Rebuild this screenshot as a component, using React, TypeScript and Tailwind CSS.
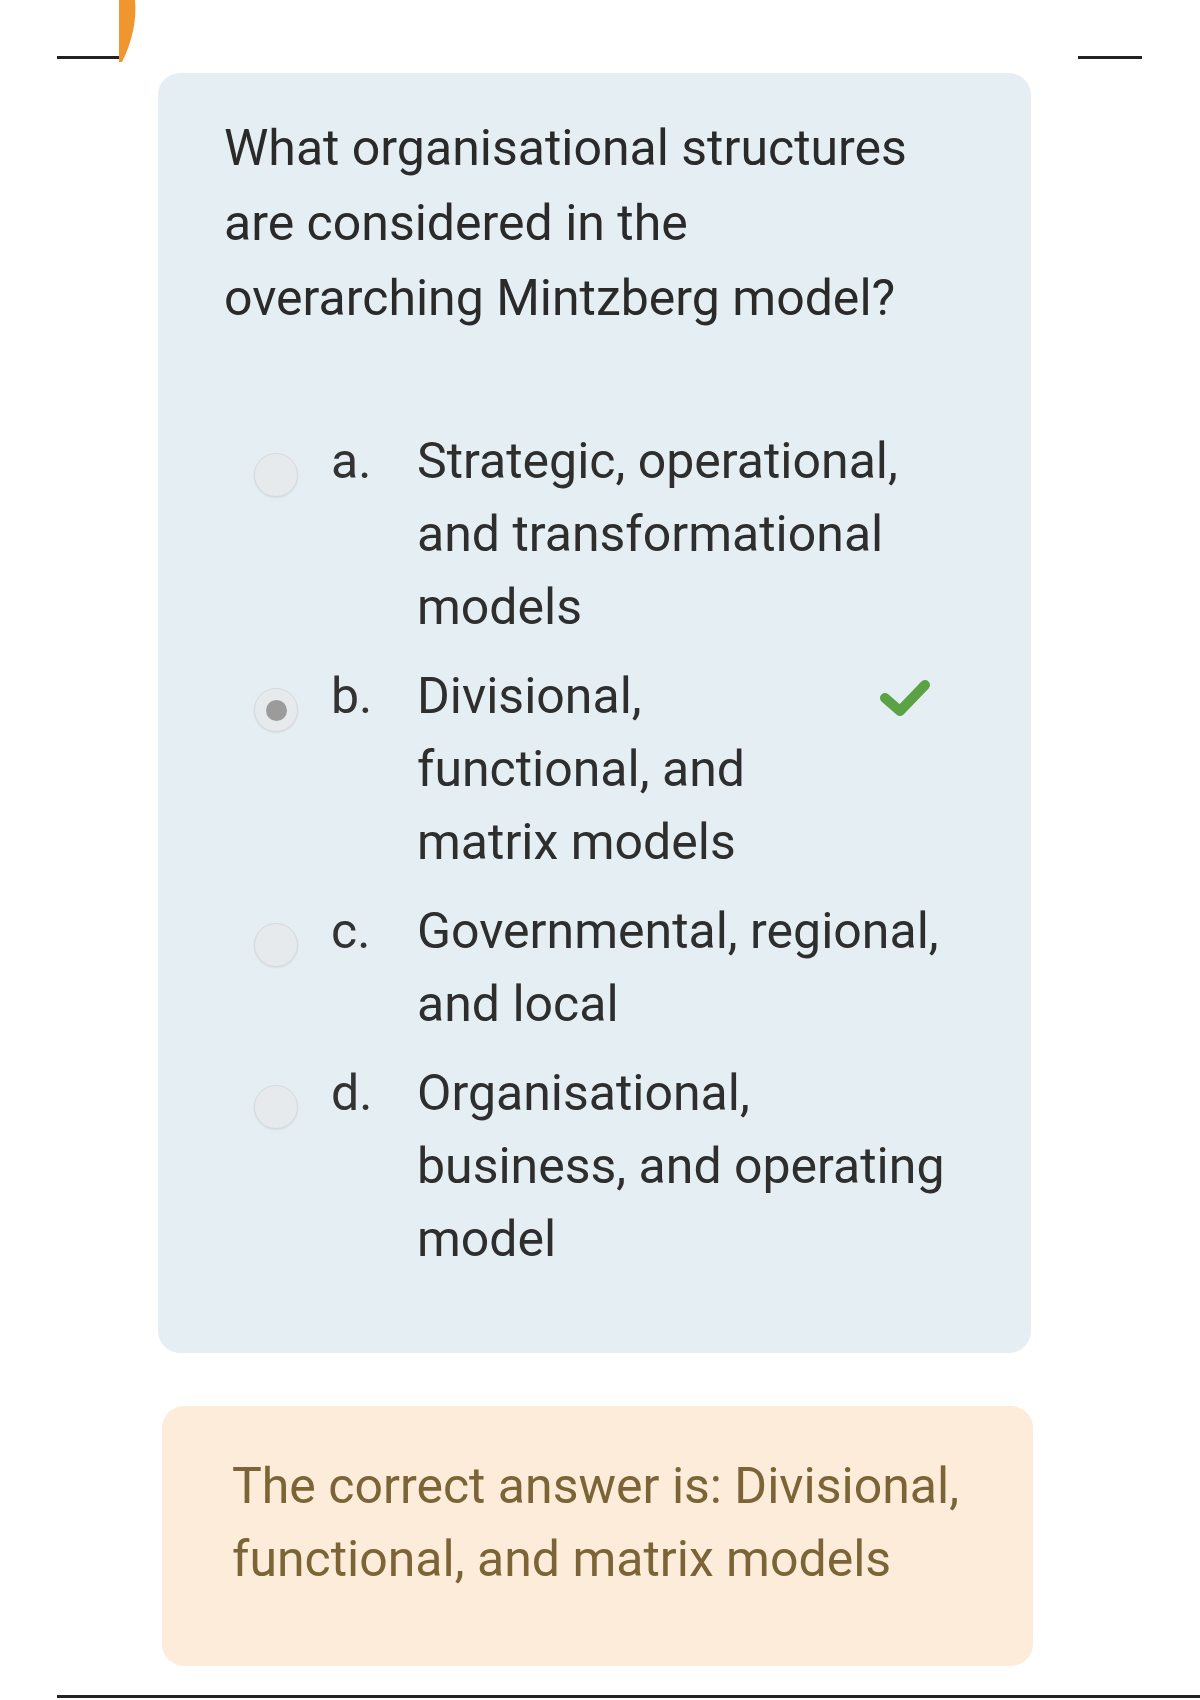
import React from 'react';

const options = [
  { key: 'a', lines: ['Strategic, operational,', 'and transformational', 'models'], checked: false, correct: false },
  { key: 'b', lines: ['Divisional,', 'functional, and', 'matrix models'], checked: true, correct: true },
  { key: 'c', lines: ['Governmental, regional,', 'and local'], checked: false, correct: false },
  { key: 'd', lines: ['Organisational,', 'business, and operating', 'model'], checked: false, correct: false },
];

function Radio({ checked }: { checked: boolean }) {
  return (
    <div className="mt-[28px] flex h-[44px] w-[44px] shrink-0 items-center justify-center rounded-full border border-[#d6dadd] bg-[#e7eaed] shadow-[0_1px_2px_rgba(0,0,0,0.08)]">
      {checked && <div className="h-[21px] w-[21px] rounded-full bg-[#9b9b9b]" />}
    </div>
  );
}

function Check() {
  return (
    <svg width="52" height="42" viewBox="0 0 52 42">
      <path d="M7 22 L22 35 L47 9" fill="none" stroke="#5ba245" strokeWidth="10" strokeLinecap="round" strokeLinejoin="round" />
    </svg>
  );
}

export default function App() {
  return (
    <div className="relative h-[1700px] w-[1200px] overflow-hidden bg-white font-['Roboto',_'Noto_Sans',_sans-serif]">
      {/* top strip */}
      <div className="flex h-[73px] items-start justify-between pl-[57px] pr-[58px] pt-[56px]">
        <div className="h-[3px] w-[65px] bg-[#222]" />
        <div className="h-[3px] w-[64px] bg-[#222]" />
      </div>
      <svg className="absolute left-[100px] top-0" width="40" height="64" viewBox="100 0 40 64">
        <path d="M119 0 H135 C137 20 132 42 122 62 H119 Z" fill="#f0962e" />
      </svg>

      {/* question card */}
      <div className="ml-[158px] w-[873px] rounded-[22px] bg-[#e5eff3] pb-[77px] pl-[66px] pr-[40px] pt-[38px]">
        <p className="whitespace-nowrap text-[50px] leading-[75px] text-[#2a2a2a]">
          What organisational structures
          <br />
          are considered in the
          <br />
          overarching Mintzberg model?
        </p>

        <div className="mt-[89px] flex flex-col gap-[16px] pl-[30px]">
          {options.map((o) => (
            <div key={o.key} className="flex items-start">
              <Radio checked={o.checked} />
              <div className="ml-[33px] w-[86px] shrink-0 text-[50px] leading-[73px] text-[#333]">{o.key}.</div>
              <div className="flex-none whitespace-nowrap text-[50px] leading-[73px] text-[#2e2e2e]">
                {o.lines.map((l) => (
                  <div key={l}>{l}</div>
                ))}
              </div>
              {o.correct && (
                <div className="ml-auto mr-[61px] pt-[16px]">
                  <Check />
                </div>
              )}
            </div>
          ))}
        </div>
      </div>

      {/* feedback */}
      <div className="ml-[162px] mt-[53px] h-[260px] w-[871px] rounded-[22px] bg-[#fcecd9] pl-[70px] pt-[44px]">
        <p className="whitespace-nowrap text-[50px] leading-[73px] text-[#7b6536]">
          The correct answer is: Divisional,
          <br />
          functional, and matrix models
        </p>
      </div>

      <div className="absolute bottom-[2px] left-[57px] right-0 h-[3px] bg-[#222]" />
    </div>
  );
}
